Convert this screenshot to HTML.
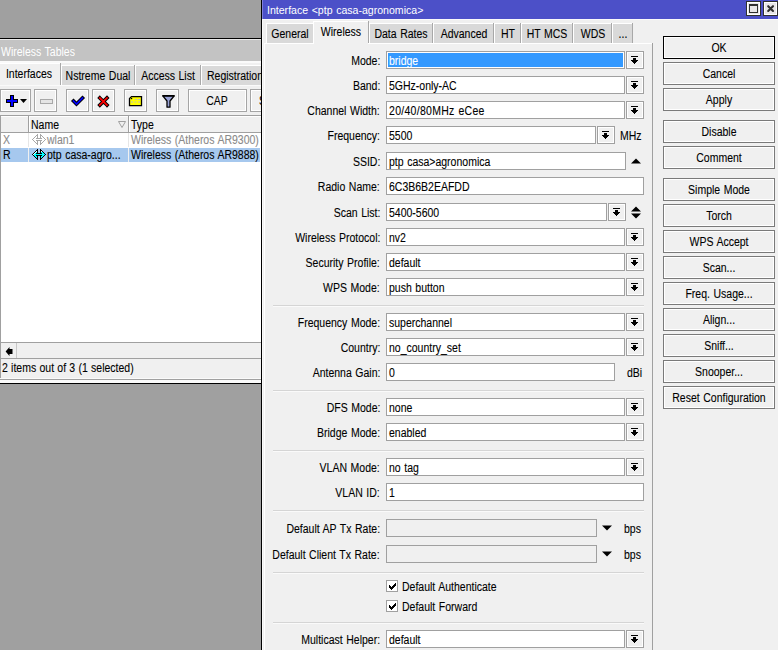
<!DOCTYPE html>
<html><head><meta charset="utf-8"><style>
html,body{margin:0;padding:0;}
body{width:778px;height:650px;overflow:hidden;position:relative;background:#a0a0a0;font-family:"Liberation Sans",sans-serif;font-size:12px;color:#000;}
.a{position:absolute;}
svg.a{overflow:visible;}
.t{position:absolute;white-space:pre;line-height:12px;transform:scaleX(0.875);-webkit-text-stroke:0.1px currentColor;word-spacing:0.7px;}
</style></head><body>
<div class="a" style="left:0px;top:38px;width:262px;height:1px;background:#000;"></div>
<div class="a" style="left:0px;top:39px;width:261px;height:1px;background:#e8e8e8;"></div>
<div class="a" style="left:0px;top:40px;width:261px;height:21px;background:#c3c3c3;"></div>
<div class="t" style="top:46px;left:1px;transform-origin:0 0;color:#fff;-webkit-text-stroke:0;">Wireless Tables</div>
<div class="a" style="left:0px;top:61px;width:261px;height:322px;background:#f0f0f0;"></div>
<div class="a" style="left:0px;top:61px;width:261px;height:2px;background:#fafafa;"></div>
<div class="a" style="left:0px;top:383px;width:262px;height:1px;background:#000;"></div>
<div class="a" style="left:0px;top:63px;width:60px;height:22px;background:#f0f0f0;"></div>
<div class="a" style="left:0px;top:63px;width:60px;height:1px;background:#fff;"></div>
<div class="a" style="left:60px;top:63px;width:1px;height:22px;background:#a8a8a8;"></div>
<div class="t" style="top:68px;left:-71px;width:200px;text-align:center;transform-origin:50% 0;">Interfaces</div>
<div class="a" style="left:61px;top:65px;width:73px;height:20px;background:#fff;"></div>
<div class="a" style="left:62px;top:66px;width:72px;height:19px;background:#d9d9d9;"></div>
<div class="a" style="left:134px;top:65px;width:1px;height:20px;background:#a8a8a8;"></div>
<div class="t" style="top:70px;left:-2.0px;width:200px;text-align:center;transform-origin:50% 0;">Nstreme Dual</div>
<div class="a" style="left:135px;top:65px;width:65px;height:20px;background:#fff;"></div>
<div class="a" style="left:136px;top:66px;width:64px;height:19px;background:#d9d9d9;"></div>
<div class="a" style="left:200px;top:65px;width:1px;height:20px;background:#a8a8a8;"></div>
<div class="t" style="top:70px;left:68.0px;width:200px;text-align:center;transform-origin:50% 0;">Access List</div>
<div class="a" style="left:201px;top:65px;width:79px;height:20px;background:#fff;"></div>
<div class="a" style="left:202px;top:66px;width:78px;height:19px;background:#d9d9d9;"></div>
<div class="a" style="left:280px;top:65px;width:1px;height:20px;background:#a8a8a8;"></div>
<div class="t" style="top:70px;left:207px;transform-origin:0 0;">Registration</div>
<div class="a" style="left:0px;top:85px;width:261px;height:1px;background:#fafafa;"></div>
<div class="a" style="left:0px;top:89px;width:31px;height:23px;background:#f0f0f0;box-sizing:border-box;border:1px solid #a5a5a5;box-shadow:inset 1px 1px 0 #fff,inset -1px -1px 0 #fff;"></div>
<div class="a" style="left:34px;top:89px;width:23px;height:23px;background:#f0f0f0;box-sizing:border-box;border:1px solid #a5a5a5;box-shadow:inset 1px 1px 0 #fff,inset -1px -1px 0 #fff;"></div>
<div class="a" style="left:66px;top:89px;width:23px;height:23px;background:#f0f0f0;box-sizing:border-box;border:1px solid #a5a5a5;box-shadow:inset 1px 1px 0 #fff,inset -1px -1px 0 #fff;"></div>
<div class="a" style="left:92px;top:89px;width:23px;height:23px;background:#f0f0f0;box-sizing:border-box;border:1px solid #a5a5a5;box-shadow:inset 1px 1px 0 #fff,inset -1px -1px 0 #fff;"></div>
<div class="a" style="left:124px;top:89px;width:23px;height:23px;background:#f0f0f0;box-sizing:border-box;border:1px solid #a5a5a5;box-shadow:inset 1px 1px 0 #fff,inset -1px -1px 0 #fff;"></div>
<div class="a" style="left:156px;top:89px;width:23px;height:23px;background:#f0f0f0;box-sizing:border-box;border:1px solid #a5a5a5;box-shadow:inset 1px 1px 0 #fff,inset -1px -1px 0 #fff;"></div>
<div class="a" style="left:188px;top:89px;width:59px;height:23px;background:#f0f0f0;box-sizing:border-box;border:1px solid #a5a5a5;box-shadow:inset 1px 1px 0 #fff,inset -1px -1px 0 #fff;"></div>
<div class="a" style="left:250px;top:89px;width:30px;height:23px;background:#f0f0f0;box-sizing:border-box;border:1px solid #a5a5a5;box-shadow:inset 1px 1px 0 #fff,inset -1px -1px 0 #fff;"></div>
<div class="t" style="top:95px;left:117px;width:200px;text-align:center;transform-origin:50% 0;">CAP</div>
<div class="t" style="top:95px;left:258.5px;transform-origin:0 0;">S</div>
<svg class="a" style="left:6px;top:95px" width="22" height="12" viewBox="0 0 22 12"><path d="M4 0h4v4h4v4h-4v4h-4v-4h-4v-4h4z" fill="#000"/><path d="M5 1h2v4h4v2h-4v4h-2v-4h-4v-2h4z" fill="#0000ff"/><path d="M14 4h7l-3.5 4z" fill="#000"/></svg>
<svg class="a" style="left:40px;top:99px" width="13" height="5" viewBox="0 0 13 5"><rect x="0.5" y="0.5" width="12" height="4" fill="#e4e4e4" stroke="#a8a8a8"/></svg>
<svg class="a" style="left:70px;top:94px" width="16" height="14" viewBox="0 0 16 14"><path d="M3.5 7l3 3l6-6" fill="none" stroke="#000" stroke-width="3.6" stroke-linecap="square"/><path d="M3.5 7l3 3l6-6" fill="none" stroke="#0000ff" stroke-width="1.7" stroke-linecap="square"/></svg>
<svg class="a" style="left:96px;top:94px" width="16" height="15" viewBox="0 0 16 15"><path d="M3.8 3.9L11 11.1M11 3.9L3.8 11.1" fill="none" stroke="#000" stroke-width="3.6" stroke-linecap="square"/><path d="M3.8 3.9L11 11.1M11 3.9L3.8 11.1" fill="none" stroke="#ff0000" stroke-width="1.7" stroke-linecap="square"/></svg>
<svg class="a" style="left:128px;top:95px" width="15" height="12" viewBox="0 0 15 12"><path d="M3.5 1.6h10v9h-12v-7z" fill="#ffff00" stroke="#000" stroke-width="1.3"/><rect x="3" y="3" width="1.2" height="1.2" fill="#000"/><path d="M7 4.5h2M10 4.5h2M3 7h2M6.5 7h2M10 7h2" stroke="#b8b8c8" stroke-width="1"/></svg>
<svg class="a" style="left:161px;top:94px" width="15" height="15" viewBox="0 0 15 15"><path d="M1.8 1.8h11.4l-4.2 5.2v6.2h-3v-6.2z" fill="#9aa4d8" stroke="#000" stroke-width="1.3" stroke-linejoin="round"/><rect x="1.5" y="1" width="12" height="1.6" fill="#000"/></svg>
<div class="a" style="left:0px;top:115px;width:261px;height:1px;background:#a0a0a0;"></div>
<div class="a" style="left:0px;top:116px;width:261px;height:16px;background:#f0f0f0;"></div>
<div class="a" style="left:1px;top:116px;width:260px;height:1px;background:#fff;"></div>
<div class="a" style="left:0px;top:132px;width:261px;height:1px;background:#a0a0a0;"></div>
<div class="a" style="left:28px;top:116px;width:1px;height:16px;background:#a0a0a0;"></div>
<div class="a" style="left:29px;top:116px;width:1px;height:16px;background:#fff;"></div>
<div class="a" style="left:128px;top:116px;width:1px;height:16px;background:#a0a0a0;"></div>
<div class="a" style="left:129px;top:116px;width:1px;height:16px;background:#fff;"></div>
<div class="t" style="top:119px;left:31px;transform-origin:0 0;">Name</div>
<div class="t" style="top:119px;left:131px;transform-origin:0 0;">Type</div>
<svg class="a" style="left:118px;top:121px" width="8" height="7" viewBox="0 0 8 7"><path d="M0.5 0.5h7l-3.5 6z" fill="none" stroke="#a0a0a0" stroke-width="1"/></svg>
<div class="a" style="left:0px;top:133px;width:261px;height:209px;background:#fff;"></div>
<div class="a" style="left:0px;top:115px;width:1px;height:263px;background:#a0a0a0;"></div>
<div class="a" style="left:28px;top:133px;width:1px;height:14px;background:#e6e6e6;"></div>
<div class="a" style="left:128px;top:133px;width:1px;height:14px;background:#e6e6e6;"></div>
<div class="t" style="top:134px;left:3px;transform-origin:0 0;color:#8a8a8a;">X</div>
<div class="t" style="top:134px;left:47px;transform-origin:0 0;color:#8a8a8a;">wlan1</div>
<div class="t" style="top:134px;left:131px;transform-origin:0 0;color:#8a8a8a;">Wireless (Atheros AR9300)</div>
<div class="a" style="left:1px;top:148px;width:259px;height:14px;background:#a6c8ee;"></div>
<div class="a" style="left:28px;top:148px;width:1px;height:14px;background:#f0f0f0;"></div>
<div class="a" style="left:128px;top:148px;width:1px;height:14px;background:#f0f0f0;"></div>
<div class="t" style="top:149px;left:3px;transform-origin:0 0;">R</div>
<div class="t" style="top:149px;left:47px;transform-origin:0 0;">ptp casa-agro...</div>
<div class="t" style="top:149px;left:131px;transform-origin:0 0;">Wireless (Atheros AR9888)</div>
<svg class="a" style="left:32px;top:134px" width="14" height="11" viewBox="0 0 14 11"><g shape-rendering="crispEdges"><rect x="5" y="0" width="1" height="1" fill="#a8a8a8"/><rect x="8" y="0" width="1" height="1" fill="#a8a8a8"/><rect x="4" y="1" width="1" height="1" fill="#a8a8a8"/><rect x="5" y="1" width="1" height="1" fill="#a8a8a8"/><rect x="8" y="1" width="1" height="1" fill="#a8a8a8"/><rect x="9" y="1" width="1" height="1" fill="#a8a8a8"/><rect x="3" y="2" width="1" height="1" fill="#a8a8a8"/><rect x="4" y="2" width="1" height="1" fill="#fff"/><rect x="5" y="2" width="1" height="1" fill="#a8a8a8"/><rect x="8" y="2" width="1" height="1" fill="#a8a8a8"/><rect x="9" y="2" width="1" height="1" fill="#fff"/><rect x="10" y="2" width="1" height="1" fill="#a8a8a8"/><rect x="2" y="3" width="1" height="1" fill="#a8a8a8"/><rect x="3" y="3" width="1" height="1" fill="#fff"/><rect x="4" y="3" width="1" height="1" fill="#fff"/><rect x="5" y="3" width="1" height="1" fill="#a8a8a8"/><rect x="8" y="3" width="1" height="1" fill="#a8a8a8"/><rect x="9" y="3" width="1" height="1" fill="#fff"/><rect x="10" y="3" width="1" height="1" fill="#fff"/><rect x="11" y="3" width="1" height="1" fill="#a8a8a8"/><rect x="1" y="4" width="1" height="1" fill="#a8a8a8"/><rect x="2" y="4" width="1" height="1" fill="#fff"/><rect x="3" y="4" width="1" height="1" fill="#fff"/><rect x="4" y="4" width="1" height="1" fill="#a8a8a8"/><rect x="5" y="4" width="1" height="1" fill="#a8a8a8"/><rect x="6" y="4" width="1" height="1" fill="#a8a8a8"/><rect x="7" y="4" width="1" height="1" fill="#a8a8a8"/><rect x="8" y="4" width="1" height="1" fill="#a8a8a8"/><rect x="9" y="4" width="1" height="1" fill="#a8a8a8"/><rect x="10" y="4" width="1" height="1" fill="#fff"/><rect x="11" y="4" width="1" height="1" fill="#fff"/><rect x="12" y="4" width="1" height="1" fill="#a8a8a8"/><rect x="0" y="5" width="1" height="1" fill="#a8a8a8"/><rect x="1" y="5" width="1" height="1" fill="#fff"/><rect x="2" y="5" width="1" height="1" fill="#fff"/><rect x="3" y="5" width="1" height="1" fill="#fff"/><rect x="4" y="5" width="1" height="1" fill="#fff"/><rect x="5" y="5" width="1" height="1" fill="#fff"/><rect x="6" y="5" width="1" height="1" fill="#fff"/><rect x="7" y="5" width="1" height="1" fill="#fff"/><rect x="8" y="5" width="1" height="1" fill="#fff"/><rect x="9" y="5" width="1" height="1" fill="#fff"/><rect x="10" y="5" width="1" height="1" fill="#fff"/><rect x="11" y="5" width="1" height="1" fill="#fff"/><rect x="12" y="5" width="1" height="1" fill="#fff"/><rect x="13" y="5" width="1" height="1" fill="#a8a8a8"/><rect x="1" y="6" width="1" height="1" fill="#a8a8a8"/><rect x="2" y="6" width="1" height="1" fill="#fff"/><rect x="3" y="6" width="1" height="1" fill="#fff"/><rect x="4" y="6" width="1" height="1" fill="#a8a8a8"/><rect x="5" y="6" width="1" height="1" fill="#a8a8a8"/><rect x="6" y="6" width="1" height="1" fill="#a8a8a8"/><rect x="7" y="6" width="1" height="1" fill="#a8a8a8"/><rect x="8" y="6" width="1" height="1" fill="#a8a8a8"/><rect x="9" y="6" width="1" height="1" fill="#a8a8a8"/><rect x="10" y="6" width="1" height="1" fill="#fff"/><rect x="11" y="6" width="1" height="1" fill="#fff"/><rect x="12" y="6" width="1" height="1" fill="#a8a8a8"/><rect x="2" y="7" width="1" height="1" fill="#a8a8a8"/><rect x="3" y="7" width="1" height="1" fill="#fff"/><rect x="4" y="7" width="1" height="1" fill="#fff"/><rect x="5" y="7" width="1" height="1" fill="#a8a8a8"/><rect x="8" y="7" width="1" height="1" fill="#a8a8a8"/><rect x="9" y="7" width="1" height="1" fill="#fff"/><rect x="10" y="7" width="1" height="1" fill="#fff"/><rect x="11" y="7" width="1" height="1" fill="#a8a8a8"/><rect x="3" y="8" width="1" height="1" fill="#a8a8a8"/><rect x="4" y="8" width="1" height="1" fill="#fff"/><rect x="5" y="8" width="1" height="1" fill="#a8a8a8"/><rect x="8" y="8" width="1" height="1" fill="#a8a8a8"/><rect x="9" y="8" width="1" height="1" fill="#fff"/><rect x="10" y="8" width="1" height="1" fill="#a8a8a8"/><rect x="4" y="9" width="1" height="1" fill="#a8a8a8"/><rect x="5" y="9" width="1" height="1" fill="#a8a8a8"/><rect x="8" y="9" width="1" height="1" fill="#a8a8a8"/><rect x="9" y="9" width="1" height="1" fill="#a8a8a8"/><rect x="5" y="10" width="1" height="1" fill="#a8a8a8"/><rect x="8" y="10" width="1" height="1" fill="#a8a8a8"/></g></svg>
<svg class="a" style="left:32px;top:149px" width="14" height="11" viewBox="0 0 14 11"><g shape-rendering="crispEdges"><rect x="5" y="0" width="1" height="1" fill="#000"/><rect x="8" y="0" width="1" height="1" fill="#000"/><rect x="4" y="1" width="1" height="1" fill="#000"/><rect x="5" y="1" width="1" height="1" fill="#000"/><rect x="8" y="1" width="1" height="1" fill="#000"/><rect x="9" y="1" width="1" height="1" fill="#000"/><rect x="3" y="2" width="1" height="1" fill="#000"/><rect x="4" y="2" width="1" height="1" fill="#fff"/><rect x="5" y="2" width="1" height="1" fill="#000"/><rect x="8" y="2" width="1" height="1" fill="#000"/><rect x="9" y="2" width="1" height="1" fill="#fff"/><rect x="10" y="2" width="1" height="1" fill="#000"/><rect x="2" y="3" width="1" height="1" fill="#000"/><rect x="3" y="3" width="1" height="1" fill="#fff"/><rect x="4" y="3" width="1" height="1" fill="#00ffff"/><rect x="5" y="3" width="1" height="1" fill="#000"/><rect x="8" y="3" width="1" height="1" fill="#000"/><rect x="9" y="3" width="1" height="1" fill="#00ffff"/><rect x="10" y="3" width="1" height="1" fill="#00ffff"/><rect x="11" y="3" width="1" height="1" fill="#000"/><rect x="1" y="4" width="1" height="1" fill="#000"/><rect x="2" y="4" width="1" height="1" fill="#fff"/><rect x="3" y="4" width="1" height="1" fill="#00ffff"/><rect x="4" y="4" width="1" height="1" fill="#000"/><rect x="5" y="4" width="1" height="1" fill="#000"/><rect x="6" y="4" width="1" height="1" fill="#000"/><rect x="7" y="4" width="1" height="1" fill="#000"/><rect x="8" y="4" width="1" height="1" fill="#000"/><rect x="9" y="4" width="1" height="1" fill="#000"/><rect x="10" y="4" width="1" height="1" fill="#00ffff"/><rect x="11" y="4" width="1" height="1" fill="#00ffff"/><rect x="12" y="4" width="1" height="1" fill="#000"/><rect x="0" y="5" width="1" height="1" fill="#000"/><rect x="1" y="5" width="1" height="1" fill="#fff"/><rect x="2" y="5" width="1" height="1" fill="#00ffff"/><rect x="3" y="5" width="1" height="1" fill="#00ffff"/><rect x="4" y="5" width="1" height="1" fill="#00ffff"/><rect x="5" y="5" width="1" height="1" fill="#00ffff"/><rect x="6" y="5" width="1" height="1" fill="#00ffff"/><rect x="7" y="5" width="1" height="1" fill="#00ffff"/><rect x="8" y="5" width="1" height="1" fill="#00ffff"/><rect x="9" y="5" width="1" height="1" fill="#00ffff"/><rect x="10" y="5" width="1" height="1" fill="#00ffff"/><rect x="11" y="5" width="1" height="1" fill="#00ffff"/><rect x="12" y="5" width="1" height="1" fill="#00ffff"/><rect x="13" y="5" width="1" height="1" fill="#000"/><rect x="1" y="6" width="1" height="1" fill="#000"/><rect x="2" y="6" width="1" height="1" fill="#00ffff"/><rect x="3" y="6" width="1" height="1" fill="#00ffff"/><rect x="4" y="6" width="1" height="1" fill="#000"/><rect x="5" y="6" width="1" height="1" fill="#000"/><rect x="6" y="6" width="1" height="1" fill="#000"/><rect x="7" y="6" width="1" height="1" fill="#000"/><rect x="8" y="6" width="1" height="1" fill="#000"/><rect x="9" y="6" width="1" height="1" fill="#000"/><rect x="10" y="6" width="1" height="1" fill="#00ffff"/><rect x="11" y="6" width="1" height="1" fill="#00ffff"/><rect x="12" y="6" width="1" height="1" fill="#000"/><rect x="2" y="7" width="1" height="1" fill="#000"/><rect x="3" y="7" width="1" height="1" fill="#00ffff"/><rect x="4" y="7" width="1" height="1" fill="#00ffff"/><rect x="5" y="7" width="1" height="1" fill="#000"/><rect x="8" y="7" width="1" height="1" fill="#000"/><rect x="9" y="7" width="1" height="1" fill="#00ffff"/><rect x="10" y="7" width="1" height="1" fill="#00ffff"/><rect x="11" y="7" width="1" height="1" fill="#000"/><rect x="3" y="8" width="1" height="1" fill="#000"/><rect x="4" y="8" width="1" height="1" fill="#00ffff"/><rect x="5" y="8" width="1" height="1" fill="#000"/><rect x="8" y="8" width="1" height="1" fill="#000"/><rect x="9" y="8" width="1" height="1" fill="#00ffff"/><rect x="10" y="8" width="1" height="1" fill="#000"/><rect x="4" y="9" width="1" height="1" fill="#000"/><rect x="5" y="9" width="1" height="1" fill="#000"/><rect x="8" y="9" width="1" height="1" fill="#000"/><rect x="9" y="9" width="1" height="1" fill="#000"/><rect x="5" y="10" width="1" height="1" fill="#000"/><rect x="8" y="10" width="1" height="1" fill="#000"/></g></svg>
<div class="a" style="left:0px;top:342px;width:261px;height:1px;background:#a0a0a0;"></div>
<div class="a" style="left:1px;top:343px;width:260px;height:15px;background:#f0f0f0;"></div>
<div class="a" style="left:16px;top:343px;width:1px;height:15px;background:#c8c8c8;"></div>
<svg class="a" style="left:5px;top:346px" width="9" height="11" viewBox="0 0 9 11"><path d="M0.6 5.5L4.5 1V3H7.5V8H4.5V10Z" fill="#000"/></svg>
<div class="a" style="left:0px;top:358px;width:261px;height:1px;background:#a0a0a0;"></div>
<div class="t" style="top:362px;left:2px;transform-origin:0 0;word-spacing:0.4px;">2 items out of 3 (1 selected)</div>
<div class="a" style="left:0px;top:378px;width:261px;height:1px;background:#fafafa;"></div>
<div class="a" style="left:0px;top:379px;width:261px;height:1px;background:#a0a0a0;"></div>
<div class="a" style="left:0px;top:380px;width:261px;height:3px;background:#fafafa;"></div>
<div class="a" style="left:261px;top:0px;width:1px;height:650px;background:#000;"></div>
<div class="a" style="left:262px;top:0px;width:516px;height:19px;background:#4c50c8;"></div>
<div class="t" style="top:4px;left:267px;transform-origin:0 0;color:#fff;-webkit-text-stroke:0;font-size:11px;transform:scaleX(0.96);">Interface &lt;ptp casa-agronomica&gt;</div>
<div class="a" style="left:262px;top:0px;width:1px;height:19px;background:#8080dc;"></div>
<div class="a" style="left:262px;top:19px;width:516px;height:1px;background:#fafafa;"></div>
<div class="a" style="left:262px;top:20px;width:516px;height:630px;background:#f0f0f0;"></div>
<div class="a" style="left:262px;top:19px;width:1px;height:631px;background:#fafafa;"></div>
<div class="a" style="left:746px;top:1px;width:15px;height:15px;background:#e8e6e8;box-sizing:border-box;border:1px solid #303030;box-shadow:inset 1px 1px 0 #fff,inset -1px -1px 0 #fff;"></div>
<svg class="a" style="left:749px;top:4px" width="9" height="9" viewBox="0 0 9 9"><rect x="0.5" y="1" width="8" height="7.5" fill="none" stroke="#303030" stroke-width="1"/><rect x="0" y="0" width="9" height="2" fill="#303030"/></svg>
<div class="a" style="left:763px;top:1px;width:15px;height:15px;background:#e8e6e8;box-sizing:border-box;border:1px solid #303030;box-shadow:inset 1px 1px 0 #fff,inset -1px -1px 0 #fff;"></div>
<svg class="a" style="left:766px;top:4px" width="9" height="9" viewBox="0 0 9 9"><path d="M2.2 2.2l4.8 4.8M7 2.2l-4.8 4.8" stroke="#303030" stroke-width="2.1" stroke-linecap="round"/></svg>
<div class="a" style="left:266px;top:23px;width:47px;height:20px;background:#fff;"></div>
<div class="a" style="left:267px;top:24px;width:46px;height:19px;background:#d9d9d9;"></div>
<div class="a" style="left:313px;top:23px;width:1px;height:20px;background:#a8a8a8;"></div>
<div class="t" style="top:28px;left:190.0px;width:200px;text-align:center;transform-origin:50% 0;">General</div>
<div class="a" style="left:369px;top:23px;width:63px;height:20px;background:#fff;"></div>
<div class="a" style="left:370px;top:24px;width:62px;height:19px;background:#d9d9d9;"></div>
<div class="a" style="left:432px;top:23px;width:1px;height:20px;background:#a8a8a8;"></div>
<div class="t" style="top:28px;left:301.0px;width:200px;text-align:center;transform-origin:50% 0;">Data Rates</div>
<div class="a" style="left:433px;top:23px;width:60px;height:20px;background:#fff;"></div>
<div class="a" style="left:434px;top:24px;width:59px;height:19px;background:#d9d9d9;"></div>
<div class="a" style="left:493px;top:23px;width:1px;height:20px;background:#a8a8a8;"></div>
<div class="t" style="top:28px;left:363.5px;width:200px;text-align:center;transform-origin:50% 0;">Advanced</div>
<div class="a" style="left:494px;top:23px;width:26px;height:20px;background:#fff;"></div>
<div class="a" style="left:495px;top:24px;width:25px;height:19px;background:#d9d9d9;"></div>
<div class="a" style="left:520px;top:23px;width:1px;height:20px;background:#a8a8a8;"></div>
<div class="t" style="top:28px;left:407.5px;width:200px;text-align:center;transform-origin:50% 0;">HT</div>
<div class="a" style="left:521px;top:23px;width:51px;height:20px;background:#fff;"></div>
<div class="a" style="left:522px;top:24px;width:50px;height:19px;background:#d9d9d9;"></div>
<div class="a" style="left:572px;top:23px;width:1px;height:20px;background:#a8a8a8;"></div>
<div class="t" style="top:28px;left:447.0px;width:200px;text-align:center;transform-origin:50% 0;">HT MCS</div>
<div class="a" style="left:573px;top:23px;width:38px;height:20px;background:#fff;"></div>
<div class="a" style="left:574px;top:24px;width:37px;height:19px;background:#d9d9d9;"></div>
<div class="a" style="left:611px;top:23px;width:1px;height:20px;background:#a8a8a8;"></div>
<div class="t" style="top:28px;left:492.5px;width:200px;text-align:center;transform-origin:50% 0;">WDS</div>
<div class="a" style="left:612px;top:23px;width:20px;height:20px;background:#fff;"></div>
<div class="a" style="left:613px;top:24px;width:19px;height:19px;background:#d9d9d9;"></div>
<div class="a" style="left:632px;top:23px;width:1px;height:20px;background:#a8a8a8;"></div>
<div class="t" style="top:28px;left:522.5px;width:200px;text-align:center;transform-origin:50% 0;">...</div>
<div class="a" style="left:313px;top:21px;width:55px;height:23px;background:#f0f0f0;"></div>
<div class="a" style="left:313px;top:21px;width:55px;height:1px;background:#fff;"></div>
<div class="a" style="left:313px;top:21px;width:1px;height:22px;background:#fff;"></div>
<div class="a" style="left:368px;top:21px;width:1px;height:22px;background:#a8a8a8;"></div>
<div class="t" style="top:26px;left:241px;width:200px;text-align:center;transform-origin:50% 0;">Wireless</div>
<div class="a" style="left:264px;top:43px;width:389px;height:607px;background:#f0f0f0;"></div>
<div class="a" style="left:264px;top:43px;width:389px;height:1px;background:#fff;"></div>
<div class="a" style="left:264px;top:43px;width:1px;height:607px;background:#fff;"></div>
<div class="a" style="left:652px;top:43px;width:1px;height:607px;background:#a0a0a0;"></div>
<div class="a" style="left:314px;top:43px;width:54px;height:1px;background:#f0f0f0;"></div>
<div class="t" style="top:55px;right:398px;transform-origin:100% 0;">Mode:</div>
<div class="a" style="left:386px;top:51px;width:239px;height:18px;background:#fff;box-sizing:border-box;border:1px solid #a0a0a0;"></div>
<div class="a" style="left:626px;top:51px;width:18px;height:18px;background:#f0f0f0;box-sizing:border-box;border:1px solid #a0a0a0;box-shadow:inset 1px 1px 0 #fff,inset -1px -1px 0 #fff;"></div>
<svg class="a" style="left:626px;top:51px" width="18" height="18" viewBox="0 0 18 18"><g fill="#000" shape-rendering="crispEdges"><rect x="5" y="5" width="7" height="1"/><rect x="7" y="7" width="3" height="2"/><rect x="5" y="9" width="7" height="1"/><rect x="6" y="10" width="5" height="1"/><rect x="7" y="11" width="3" height="1"/><rect x="8" y="12" width="1" height="1"/></g></svg>
<div class="a" style="left:388px;top:53px;width:235px;height:14px;background:#3399ff;"></div>
<div class="t" style="top:55px;left:389px;transform-origin:0 0;color:#fff;">bridge</div>
<div class="t" style="top:80px;right:398px;transform-origin:100% 0;">Band:</div>
<div class="a" style="left:386px;top:76px;width:239px;height:18px;background:#fff;box-sizing:border-box;border:1px solid #a0a0a0;"></div>
<div class="a" style="left:626px;top:76px;width:18px;height:18px;background:#f0f0f0;box-sizing:border-box;border:1px solid #a0a0a0;box-shadow:inset 1px 1px 0 #fff,inset -1px -1px 0 #fff;"></div>
<svg class="a" style="left:626px;top:76px" width="18" height="18" viewBox="0 0 18 18"><g fill="#000" shape-rendering="crispEdges"><rect x="5" y="5" width="7" height="1"/><rect x="7" y="7" width="3" height="2"/><rect x="5" y="9" width="7" height="1"/><rect x="6" y="10" width="5" height="1"/><rect x="7" y="11" width="3" height="1"/><rect x="8" y="12" width="1" height="1"/></g></svg>
<div class="t" style="top:80px;left:389px;transform-origin:0 0;">5GHz-only-AC</div>
<div class="t" style="top:105px;right:398px;transform-origin:100% 0;">Channel Width:</div>
<div class="a" style="left:386px;top:101px;width:239px;height:18px;background:#fff;box-sizing:border-box;border:1px solid #a0a0a0;"></div>
<div class="a" style="left:626px;top:101px;width:18px;height:18px;background:#f0f0f0;box-sizing:border-box;border:1px solid #a0a0a0;box-shadow:inset 1px 1px 0 #fff,inset -1px -1px 0 #fff;"></div>
<svg class="a" style="left:626px;top:101px" width="18" height="18" viewBox="0 0 18 18"><g fill="#000" shape-rendering="crispEdges"><rect x="5" y="5" width="7" height="1"/><rect x="7" y="7" width="3" height="2"/><rect x="5" y="9" width="7" height="1"/><rect x="6" y="10" width="5" height="1"/><rect x="7" y="11" width="3" height="1"/><rect x="8" y="12" width="1" height="1"/></g></svg>
<div class="t" style="top:105px;left:389px;transform-origin:0 0;letter-spacing:0.33px;">20/40/80MHz eCee</div>
<div class="t" style="top:130px;right:398px;transform-origin:100% 0;">Frequency:</div>
<div class="a" style="left:386px;top:126px;width:210px;height:18px;background:#fff;box-sizing:border-box;border:1px solid #a0a0a0;"></div>
<div class="a" style="left:597px;top:126px;width:18px;height:18px;background:#f0f0f0;box-sizing:border-box;border:1px solid #a0a0a0;box-shadow:inset 1px 1px 0 #fff,inset -1px -1px 0 #fff;"></div>
<svg class="a" style="left:597px;top:126px" width="18" height="18" viewBox="0 0 18 18"><g fill="#000" shape-rendering="crispEdges"><rect x="5" y="5" width="7" height="1"/><rect x="7" y="7" width="3" height="2"/><rect x="5" y="9" width="7" height="1"/><rect x="6" y="10" width="5" height="1"/><rect x="7" y="11" width="3" height="1"/><rect x="8" y="12" width="1" height="1"/></g></svg>
<div class="t" style="top:130px;left:620px;transform-origin:0 0;">MHz</div>
<div class="t" style="top:130px;left:389px;transform-origin:0 0;">5500</div>
<div class="t" style="top:156px;right:398px;transform-origin:100% 0;">SSID:</div>
<div class="a" style="left:386px;top:152px;width:240px;height:18px;background:#fff;box-sizing:border-box;border:1px solid #a0a0a0;"></div>
<svg class="a" style="left:631px;top:158px" width="10" height="6" viewBox="0 0 10 6"><path d="M0 5.5L5 0.5L10 5.5Z" fill="#000"/></svg>
<div class="t" style="top:156px;left:389px;transform-origin:0 0;">ptp casa&gt;agronomica</div>
<div class="t" style="top:181px;right:398px;transform-origin:100% 0;">Radio Name:</div>
<div class="a" style="left:386px;top:177px;width:258px;height:18px;background:#fff;box-sizing:border-box;border:1px solid #a0a0a0;"></div>
<div class="t" style="top:181px;left:389px;transform-origin:0 0;">6C3B6B2EAFDD</div>
<div class="t" style="top:207px;right:398px;transform-origin:100% 0;">Scan List:</div>
<div class="a" style="left:386px;top:203px;width:221px;height:18px;background:#fff;box-sizing:border-box;border:1px solid #a0a0a0;"></div>
<div class="a" style="left:608px;top:203px;width:18px;height:18px;background:#f0f0f0;box-sizing:border-box;border:1px solid #a0a0a0;box-shadow:inset 1px 1px 0 #fff,inset -1px -1px 0 #fff;"></div>
<svg class="a" style="left:608px;top:203px" width="18" height="18" viewBox="0 0 18 18"><g fill="#000" shape-rendering="crispEdges"><rect x="5" y="5" width="7" height="1"/><rect x="7" y="7" width="3" height="2"/><rect x="5" y="9" width="7" height="1"/><rect x="6" y="10" width="5" height="1"/><rect x="7" y="11" width="3" height="1"/><rect x="8" y="12" width="1" height="1"/></g></svg>
<svg class="a" style="left:631px;top:206px" width="10" height="13" viewBox="0 0 10 13"><path d="M0 5.5L5 0.5L10 5.5Z M0 7.5L5 12.5L10 7.5Z" fill="#000"/></svg>
<div class="t" style="top:207px;left:389px;transform-origin:0 0;">5400-5600</div>
<div class="t" style="top:232px;right:398px;transform-origin:100% 0;">Wireless Protocol:</div>
<div class="a" style="left:386px;top:228px;width:239px;height:18px;background:#fff;box-sizing:border-box;border:1px solid #a0a0a0;"></div>
<div class="a" style="left:626px;top:228px;width:18px;height:18px;background:#f0f0f0;box-sizing:border-box;border:1px solid #a0a0a0;box-shadow:inset 1px 1px 0 #fff,inset -1px -1px 0 #fff;"></div>
<svg class="a" style="left:626px;top:228px" width="18" height="18" viewBox="0 0 18 18"><g fill="#000" shape-rendering="crispEdges"><rect x="5" y="5" width="7" height="1"/><rect x="7" y="7" width="3" height="2"/><rect x="5" y="9" width="7" height="1"/><rect x="6" y="10" width="5" height="1"/><rect x="7" y="11" width="3" height="1"/><rect x="8" y="12" width="1" height="1"/></g></svg>
<div class="t" style="top:232px;left:389px;transform-origin:0 0;">nv2</div>
<div class="t" style="top:257px;right:398px;transform-origin:100% 0;">Security Profile:</div>
<div class="a" style="left:386px;top:253px;width:239px;height:18px;background:#fff;box-sizing:border-box;border:1px solid #a0a0a0;"></div>
<div class="a" style="left:626px;top:253px;width:18px;height:18px;background:#f0f0f0;box-sizing:border-box;border:1px solid #a0a0a0;box-shadow:inset 1px 1px 0 #fff,inset -1px -1px 0 #fff;"></div>
<svg class="a" style="left:626px;top:253px" width="18" height="18" viewBox="0 0 18 18"><g fill="#000" shape-rendering="crispEdges"><rect x="5" y="5" width="7" height="1"/><rect x="7" y="7" width="3" height="2"/><rect x="5" y="9" width="7" height="1"/><rect x="6" y="10" width="5" height="1"/><rect x="7" y="11" width="3" height="1"/><rect x="8" y="12" width="1" height="1"/></g></svg>
<div class="t" style="top:257px;left:389px;transform-origin:0 0;">default</div>
<div class="t" style="top:282px;right:398px;transform-origin:100% 0;">WPS Mode:</div>
<div class="a" style="left:386px;top:278px;width:239px;height:18px;background:#fff;box-sizing:border-box;border:1px solid #a0a0a0;"></div>
<div class="a" style="left:626px;top:278px;width:18px;height:18px;background:#f0f0f0;box-sizing:border-box;border:1px solid #a0a0a0;box-shadow:inset 1px 1px 0 #fff,inset -1px -1px 0 #fff;"></div>
<svg class="a" style="left:626px;top:278px" width="18" height="18" viewBox="0 0 18 18"><g fill="#000" shape-rendering="crispEdges"><rect x="5" y="5" width="7" height="1"/><rect x="7" y="7" width="3" height="2"/><rect x="5" y="9" width="7" height="1"/><rect x="6" y="10" width="5" height="1"/><rect x="7" y="11" width="3" height="1"/><rect x="8" y="12" width="1" height="1"/></g></svg>
<div class="t" style="top:282px;left:389px;transform-origin:0 0;">push button</div>
<div class="t" style="top:317px;right:398px;transform-origin:100% 0;">Frequency Mode:</div>
<div class="a" style="left:386px;top:313px;width:239px;height:18px;background:#fff;box-sizing:border-box;border:1px solid #a0a0a0;"></div>
<div class="a" style="left:626px;top:313px;width:18px;height:18px;background:#f0f0f0;box-sizing:border-box;border:1px solid #a0a0a0;box-shadow:inset 1px 1px 0 #fff,inset -1px -1px 0 #fff;"></div>
<svg class="a" style="left:626px;top:313px" width="18" height="18" viewBox="0 0 18 18"><g fill="#000" shape-rendering="crispEdges"><rect x="5" y="5" width="7" height="1"/><rect x="7" y="7" width="3" height="2"/><rect x="5" y="9" width="7" height="1"/><rect x="6" y="10" width="5" height="1"/><rect x="7" y="11" width="3" height="1"/><rect x="8" y="12" width="1" height="1"/></g></svg>
<div class="t" style="top:317px;left:389px;transform-origin:0 0;">superchannel</div>
<div class="t" style="top:342px;right:398px;transform-origin:100% 0;">Country:</div>
<div class="a" style="left:386px;top:338px;width:239px;height:18px;background:#fff;box-sizing:border-box;border:1px solid #a0a0a0;"></div>
<div class="a" style="left:626px;top:338px;width:18px;height:18px;background:#f0f0f0;box-sizing:border-box;border:1px solid #a0a0a0;box-shadow:inset 1px 1px 0 #fff,inset -1px -1px 0 #fff;"></div>
<svg class="a" style="left:626px;top:338px" width="18" height="18" viewBox="0 0 18 18"><g fill="#000" shape-rendering="crispEdges"><rect x="5" y="5" width="7" height="1"/><rect x="7" y="7" width="3" height="2"/><rect x="5" y="9" width="7" height="1"/><rect x="6" y="10" width="5" height="1"/><rect x="7" y="11" width="3" height="1"/><rect x="8" y="12" width="1" height="1"/></g></svg>
<div class="t" style="top:342px;left:389px;transform-origin:0 0;">no_country_set</div>
<div class="t" style="top:367px;right:398px;transform-origin:100% 0;">Antenna Gain:</div>
<div class="a" style="left:386px;top:363px;width:229px;height:18px;background:#fff;box-sizing:border-box;border:1px solid #a0a0a0;"></div>
<div class="t" style="top:367px;left:627px;transform-origin:0 0;">dBi</div>
<div class="t" style="top:367px;left:389px;transform-origin:0 0;">0</div>
<div class="t" style="top:402px;right:398px;transform-origin:100% 0;">DFS Mode:</div>
<div class="a" style="left:386px;top:398px;width:239px;height:18px;background:#fff;box-sizing:border-box;border:1px solid #a0a0a0;"></div>
<div class="a" style="left:626px;top:398px;width:18px;height:18px;background:#f0f0f0;box-sizing:border-box;border:1px solid #a0a0a0;box-shadow:inset 1px 1px 0 #fff,inset -1px -1px 0 #fff;"></div>
<svg class="a" style="left:626px;top:398px" width="18" height="18" viewBox="0 0 18 18"><g fill="#000" shape-rendering="crispEdges"><rect x="5" y="5" width="7" height="1"/><rect x="7" y="7" width="3" height="2"/><rect x="5" y="9" width="7" height="1"/><rect x="6" y="10" width="5" height="1"/><rect x="7" y="11" width="3" height="1"/><rect x="8" y="12" width="1" height="1"/></g></svg>
<div class="t" style="top:402px;left:389px;transform-origin:0 0;">none</div>
<div class="t" style="top:427px;right:398px;transform-origin:100% 0;">Bridge Mode:</div>
<div class="a" style="left:386px;top:423px;width:239px;height:18px;background:#fff;box-sizing:border-box;border:1px solid #a0a0a0;"></div>
<div class="a" style="left:626px;top:423px;width:18px;height:18px;background:#f0f0f0;box-sizing:border-box;border:1px solid #a0a0a0;box-shadow:inset 1px 1px 0 #fff,inset -1px -1px 0 #fff;"></div>
<svg class="a" style="left:626px;top:423px" width="18" height="18" viewBox="0 0 18 18"><g fill="#000" shape-rendering="crispEdges"><rect x="5" y="5" width="7" height="1"/><rect x="7" y="7" width="3" height="2"/><rect x="5" y="9" width="7" height="1"/><rect x="6" y="10" width="5" height="1"/><rect x="7" y="11" width="3" height="1"/><rect x="8" y="12" width="1" height="1"/></g></svg>
<div class="t" style="top:427px;left:389px;transform-origin:0 0;">enabled</div>
<div class="t" style="top:462px;right:398px;transform-origin:100% 0;">VLAN Mode:</div>
<div class="a" style="left:386px;top:458px;width:239px;height:18px;background:#fff;box-sizing:border-box;border:1px solid #a0a0a0;"></div>
<div class="a" style="left:626px;top:458px;width:18px;height:18px;background:#f0f0f0;box-sizing:border-box;border:1px solid #a0a0a0;box-shadow:inset 1px 1px 0 #fff,inset -1px -1px 0 #fff;"></div>
<svg class="a" style="left:626px;top:458px" width="18" height="18" viewBox="0 0 18 18"><g fill="#000" shape-rendering="crispEdges"><rect x="5" y="5" width="7" height="1"/><rect x="7" y="7" width="3" height="2"/><rect x="5" y="9" width="7" height="1"/><rect x="6" y="10" width="5" height="1"/><rect x="7" y="11" width="3" height="1"/><rect x="8" y="12" width="1" height="1"/></g></svg>
<div class="t" style="top:462px;left:389px;transform-origin:0 0;">no tag</div>
<div class="t" style="top:487px;right:398px;transform-origin:100% 0;">VLAN ID:</div>
<div class="a" style="left:386px;top:483px;width:258px;height:18px;background:#fff;box-sizing:border-box;border:1px solid #a0a0a0;"></div>
<div class="t" style="top:487px;left:389px;transform-origin:0 0;">1</div>
<div class="t" style="top:523px;right:398px;transform-origin:100% 0;">Default AP Tx Rate:</div>
<div class="a" style="left:386px;top:519px;width:211px;height:18px;background:#f0f0f0;box-sizing:border-box;border:1px solid #a0a0a0;"></div>
<div class="t" style="top:523px;left:624px;transform-origin:0 0;">bps</div>
<svg class="a" style="left:602px;top:525px" width="10" height="6" viewBox="0 0 10 6"><path d="M0 0.5L10 0.5L5 5.5Z" fill="#000"/></svg>
<div class="t" style="top:549px;right:398px;transform-origin:100% 0;">Default Client Tx Rate:</div>
<div class="a" style="left:386px;top:545px;width:211px;height:18px;background:#f0f0f0;box-sizing:border-box;border:1px solid #a0a0a0;"></div>
<div class="t" style="top:549px;left:624px;transform-origin:0 0;">bps</div>
<svg class="a" style="left:602px;top:551px" width="10" height="6" viewBox="0 0 10 6"><path d="M0 0.5L10 0.5L5 5.5Z" fill="#000"/></svg>
<div class="t" style="top:634px;right:398px;transform-origin:100% 0;">Multicast Helper:</div>
<div class="a" style="left:386px;top:630px;width:239px;height:18px;background:#fff;box-sizing:border-box;border:1px solid #a0a0a0;"></div>
<div class="a" style="left:626px;top:630px;width:18px;height:18px;background:#f0f0f0;box-sizing:border-box;border:1px solid #a0a0a0;box-shadow:inset 1px 1px 0 #fff,inset -1px -1px 0 #fff;"></div>
<svg class="a" style="left:626px;top:630px" width="18" height="18" viewBox="0 0 18 18"><g fill="#000" shape-rendering="crispEdges"><rect x="5" y="5" width="7" height="1"/><rect x="7" y="7" width="3" height="2"/><rect x="5" y="9" width="7" height="1"/><rect x="6" y="10" width="5" height="1"/><rect x="7" y="11" width="3" height="1"/><rect x="8" y="12" width="1" height="1"/></g></svg>
<div class="t" style="top:634px;left:389px;transform-origin:0 0;">default</div>
<div class="a" style="left:273px;top:305px;width:371px;height:1px;background:#d5d5d5;"></div>
<div class="a" style="left:273px;top:306px;width:371px;height:1px;background:#fafafa;"></div>
<div class="a" style="left:273px;top:390px;width:371px;height:1px;background:#d5d5d5;"></div>
<div class="a" style="left:273px;top:391px;width:371px;height:1px;background:#fafafa;"></div>
<div class="a" style="left:273px;top:450px;width:371px;height:1px;background:#d5d5d5;"></div>
<div class="a" style="left:273px;top:451px;width:371px;height:1px;background:#fafafa;"></div>
<div class="a" style="left:273px;top:510px;width:371px;height:1px;background:#d5d5d5;"></div>
<div class="a" style="left:273px;top:511px;width:371px;height:1px;background:#fafafa;"></div>
<div class="a" style="left:273px;top:572px;width:371px;height:1px;background:#d5d5d5;"></div>
<div class="a" style="left:273px;top:573px;width:371px;height:1px;background:#fafafa;"></div>
<div class="a" style="left:273px;top:622px;width:371px;height:1px;background:#d5d5d5;"></div>
<div class="a" style="left:273px;top:623px;width:371px;height:1px;background:#fafafa;"></div>
<div class="a" style="left:386px;top:580px;width:12px;height:12px;background:#fff;box-sizing:border-box;border:1px solid #a0a0a0;"></div>
<svg class="a" style="left:386px;top:580px" width="12" height="12" viewBox="0 0 12 12"><g fill="#000" shape-rendering="crispEdges"><rect x="9" y="3" width="1" height="1"/><rect x="8" y="4" width="1" height="1"/><rect x="9" y="4" width="1" height="1"/><rect x="3" y="5" width="1" height="1"/><rect x="7" y="5" width="1" height="1"/><rect x="8" y="5" width="1" height="1"/><rect x="9" y="5" width="1" height="1"/><rect x="3" y="6" width="1" height="1"/><rect x="4" y="6" width="1" height="1"/><rect x="6" y="6" width="1" height="1"/><rect x="7" y="6" width="1" height="1"/><rect x="8" y="6" width="1" height="1"/><rect x="3" y="7" width="1" height="1"/><rect x="4" y="7" width="1" height="1"/><rect x="5" y="7" width="1" height="1"/><rect x="6" y="7" width="1" height="1"/><rect x="7" y="7" width="1" height="1"/><rect x="4" y="8" width="1" height="1"/><rect x="5" y="8" width="1" height="1"/><rect x="6" y="8" width="1" height="1"/><rect x="5" y="9" width="1" height="1"/></g></svg>
<div class="t" style="top:581px;left:402px;transform-origin:0 0;">Default Authenticate</div>
<div class="a" style="left:386px;top:600px;width:12px;height:12px;background:#fff;box-sizing:border-box;border:1px solid #a0a0a0;"></div>
<svg class="a" style="left:386px;top:600px" width="12" height="12" viewBox="0 0 12 12"><g fill="#000" shape-rendering="crispEdges"><rect x="9" y="3" width="1" height="1"/><rect x="8" y="4" width="1" height="1"/><rect x="9" y="4" width="1" height="1"/><rect x="3" y="5" width="1" height="1"/><rect x="7" y="5" width="1" height="1"/><rect x="8" y="5" width="1" height="1"/><rect x="9" y="5" width="1" height="1"/><rect x="3" y="6" width="1" height="1"/><rect x="4" y="6" width="1" height="1"/><rect x="6" y="6" width="1" height="1"/><rect x="7" y="6" width="1" height="1"/><rect x="8" y="6" width="1" height="1"/><rect x="3" y="7" width="1" height="1"/><rect x="4" y="7" width="1" height="1"/><rect x="5" y="7" width="1" height="1"/><rect x="6" y="7" width="1" height="1"/><rect x="7" y="7" width="1" height="1"/><rect x="4" y="8" width="1" height="1"/><rect x="5" y="8" width="1" height="1"/><rect x="6" y="8" width="1" height="1"/><rect x="5" y="9" width="1" height="1"/></g></svg>
<div class="t" style="top:601px;left:402px;transform-origin:0 0;">Default Forward</div>
<div class="a" style="left:663px;top:36px;width:112px;height:23px;background:#f0f0f0;box-sizing:border-box;border:1px solid #000;box-shadow:inset 1px 1px 0 #fff,inset -1px -1px 0 #fff;"></div>
<div class="t" style="top:42px;left:619px;width:200px;text-align:center;transform-origin:50% 0;">OK</div>
<div class="a" style="left:663px;top:62px;width:112px;height:23px;background:#f0f0f0;box-sizing:border-box;border:1px solid #7a7a7a;box-shadow:inset 1px 1px 0 #fff,inset -1px -1px 0 #fff;"></div>
<div class="t" style="top:68px;left:619px;width:200px;text-align:center;transform-origin:50% 0;">Cancel</div>
<div class="a" style="left:663px;top:88px;width:112px;height:23px;background:#f0f0f0;box-sizing:border-box;border:1px solid #7a7a7a;box-shadow:inset 1px 1px 0 #fff,inset -1px -1px 0 #fff;"></div>
<div class="t" style="top:94px;left:619px;width:200px;text-align:center;transform-origin:50% 0;">Apply</div>
<div class="a" style="left:663px;top:120px;width:112px;height:23px;background:#f0f0f0;box-sizing:border-box;border:1px solid #7a7a7a;box-shadow:inset 1px 1px 0 #fff,inset -1px -1px 0 #fff;"></div>
<div class="t" style="top:126px;left:619px;width:200px;text-align:center;transform-origin:50% 0;">Disable</div>
<div class="a" style="left:663px;top:146px;width:112px;height:23px;background:#f0f0f0;box-sizing:border-box;border:1px solid #7a7a7a;box-shadow:inset 1px 1px 0 #fff,inset -1px -1px 0 #fff;"></div>
<div class="t" style="top:152px;left:619px;width:200px;text-align:center;transform-origin:50% 0;">Comment</div>
<div class="a" style="left:663px;top:178px;width:112px;height:23px;background:#f0f0f0;box-sizing:border-box;border:1px solid #7a7a7a;box-shadow:inset 1px 1px 0 #fff,inset -1px -1px 0 #fff;"></div>
<div class="t" style="top:184px;left:619px;width:200px;text-align:center;transform-origin:50% 0;">Simple Mode</div>
<div class="a" style="left:663px;top:204px;width:112px;height:23px;background:#f0f0f0;box-sizing:border-box;border:1px solid #7a7a7a;box-shadow:inset 1px 1px 0 #fff,inset -1px -1px 0 #fff;"></div>
<div class="t" style="top:210px;left:619px;width:200px;text-align:center;transform-origin:50% 0;">Torch</div>
<div class="a" style="left:663px;top:230px;width:112px;height:23px;background:#f0f0f0;box-sizing:border-box;border:1px solid #7a7a7a;box-shadow:inset 1px 1px 0 #fff,inset -1px -1px 0 #fff;"></div>
<div class="t" style="top:236px;left:619px;width:200px;text-align:center;transform-origin:50% 0;">WPS Accept</div>
<div class="a" style="left:663px;top:256px;width:112px;height:23px;background:#f0f0f0;box-sizing:border-box;border:1px solid #7a7a7a;box-shadow:inset 1px 1px 0 #fff,inset -1px -1px 0 #fff;"></div>
<div class="t" style="top:262px;left:619px;width:200px;text-align:center;transform-origin:50% 0;">Scan...</div>
<div class="a" style="left:663px;top:282px;width:112px;height:23px;background:#f0f0f0;box-sizing:border-box;border:1px solid #7a7a7a;box-shadow:inset 1px 1px 0 #fff,inset -1px -1px 0 #fff;"></div>
<div class="t" style="top:288px;left:619px;width:200px;text-align:center;transform-origin:50% 0;">Freq. Usage...</div>
<div class="a" style="left:663px;top:308px;width:112px;height:23px;background:#f0f0f0;box-sizing:border-box;border:1px solid #7a7a7a;box-shadow:inset 1px 1px 0 #fff,inset -1px -1px 0 #fff;"></div>
<div class="t" style="top:314px;left:619px;width:200px;text-align:center;transform-origin:50% 0;">Align...</div>
<div class="a" style="left:663px;top:334px;width:112px;height:23px;background:#f0f0f0;box-sizing:border-box;border:1px solid #7a7a7a;box-shadow:inset 1px 1px 0 #fff,inset -1px -1px 0 #fff;"></div>
<div class="t" style="top:340px;left:619px;width:200px;text-align:center;transform-origin:50% 0;">Sniff...</div>
<div class="a" style="left:663px;top:360px;width:112px;height:23px;background:#f0f0f0;box-sizing:border-box;border:1px solid #7a7a7a;box-shadow:inset 1px 1px 0 #fff,inset -1px -1px 0 #fff;"></div>
<div class="t" style="top:366px;left:619px;width:200px;text-align:center;transform-origin:50% 0;">Snooper...</div>
<div class="a" style="left:663px;top:386px;width:112px;height:23px;background:#f0f0f0;box-sizing:border-box;border:1px solid #7a7a7a;box-shadow:inset 1px 1px 0 #fff,inset -1px -1px 0 #fff;"></div>
<div class="t" style="top:392px;left:619px;width:200px;text-align:center;transform-origin:50% 0;">Reset Configuration</div>
</body></html>
